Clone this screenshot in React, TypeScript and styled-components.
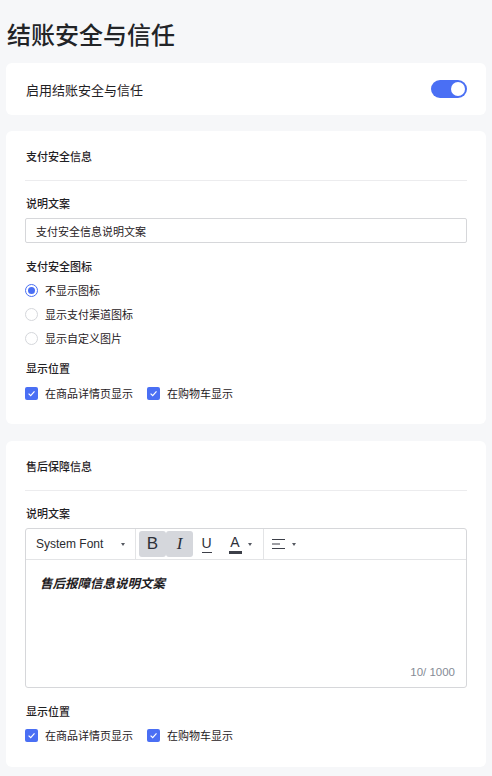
import React, { useState } from 'react'
import styled, { createGlobalStyle } from 'styled-components'

const GlobalStyle = createGlobalStyle`
    body {
        margin: 0;
        background: #f6f7f9;
        font-family: "Noto Sans CJK SC", "Liberation Sans", sans-serif;
        color: #1f2124;
    }
`

const Page = styled.div`
    padding: 16px 6px 10px 6px;
`
const PageTitle = styled.h1`
    margin: 0 0 11px 1px;
    font-size: 24px;
    line-height: 36px;
    font-weight: 500;
    color: #222427;
`
const Card = styled.div<{ $gap?: number }>`
    background: #fff;
    border-radius: 6px;
    padding: 0 19px;
    margin-bottom: ${(p) => p.$gap ?? 16}px;
`
const ToggleRow = styled.div`
    height: 52px;
    display: flex;
    align-items: center;
    justify-content: space-between;
    font-size: 13px;
    padding-left: 1px;
`
const Switch = styled.button<{ $on: boolean }>`
    width: 36px;
    height: 18px;
    border-radius: 9px;
    border: none;
    padding: 0;
    cursor: pointer;
    background: ${(p) => (p.$on ? '#4a6ff4' : '#c9ccd2')};
    display: flex;
    align-items: center;
    justify-content: ${(p) => (p.$on ? 'flex-end' : 'flex-start')};
    &::after {
        content: '';
        width: 14px;
        height: 14px;
        margin: 0 2px;
        border-radius: 50%;
        background: #fff;
    }
`
const SectionHead = styled.div`
    padding: 17px 0 16px 1px;
    font-size: 11px;
    line-height: 16px;
    font-weight: 500;
    border-bottom: 1px solid #ececee;
`
const Body = styled.div<{ $bottom: number }>`
    padding-bottom: ${(p) => p.$bottom}px;
`
const Label = styled.div<{ $top: number; $bottom: number }>`
    margin: ${(p) => p.$top}px 0 ${(p) => p.$bottom}px 1px;
    font-size: 11px;
    line-height: 16px;
    font-weight: 500;
`
const TextInput = styled.input`
    display: block;
    box-sizing: border-box;
    width: 100%;
    height: 25px;
    border: 1px solid #d6d7da;
    border-radius: 2px;
    padding: 0 10px;
    font-family: inherit;
    font-size: 11px;
    color: #1f2124;
    outline: none;
`
const OptionRow = styled.label`
    display: flex;
    align-items: center;
    height: 24px;
    gap: 7px;
    font-size: 11px;
    cursor: pointer;
`
const Radio = styled.span<{ $checked: boolean }>`
    box-sizing: border-box;
    width: 13px;
    height: 13px;
    border-radius: 50%;
    border: 1px solid ${(p) => (p.$checked ? '#4a6ff4' : '#d5d7db')};
    display: flex;
    align-items: center;
    justify-content: center;
    &::after {
        content: '';
        width: 7px;
        height: 7px;
        border-radius: 50%;
        background: ${(p) => (p.$checked ? '#4a6ff4' : 'transparent')};
    }
`
const CheckGroup = styled.div`
    display: flex;
    gap: 14px;
`
const Box = styled.span`
    width: 13px;
    height: 13px;
    border-radius: 2px;
    background: #4a6ff4;
    display: flex;
    align-items: center;
    justify-content: center;
`
const Editor = styled.div`
    border: 1px solid #d6d7da;
    border-radius: 3px;
    height: 158px;
    display: flex;
    flex-direction: column;
`
const Toolbar = styled.div`
    height: 30px;
    display: flex;
    align-items: center;
    border-bottom: 1px solid #e3e4e6;
`
const FontSelect = styled.div`
    width: 110px;
    height: 100%;
    box-sizing: border-box;
    display: flex;
    align-items: center;
    justify-content: space-between;
    padding: 0 10px;
    font-family: "Liberation Sans", Arial, sans-serif;
    font-size: 12px;
    color: #2a2c30;
    border-right: 1px solid #e3e4e6;
`
const ToolGroup = styled.div<{ $divider?: boolean }>`
    height: 100%;
    display: flex;
    align-items: center;
    padding: 0 3px;
    border-right: ${(p) => (p.$divider ? '1px solid #e3e4e6' : 'none')};
`
const ToolButton = styled.span<{ $active?: boolean; $w?: number }>`
    width: ${(p) => p.$w ?? 27}px;
    height: 26px;
    border-radius: 3px;
    background: ${(p) => (p.$active ? '#d5d7dc' : 'transparent')};
    display: flex;
    align-items: center;
    justify-content: center;
    gap: 6px;
    color: #2d3038;
`
const Glyph = styled.span<{ $serif?: boolean; $italic?: boolean }>`
    font-family: ${(p) => (p.$serif ? '"Liberation Serif", serif' : '"Liberation Sans", sans-serif')};
    font-style: ${(p) => (p.$italic ? 'italic' : 'normal')};
    font-size: 17px;
    line-height: 16px;
`
const Underlined = styled.span<{ $bar: number }>`
    display: flex;
    flex-direction: column;
    align-items: center;
    font-family: "Liberation Sans", sans-serif;
    font-size: 14px;
    line-height: 14px;
    &::after {
        content: '';
        width: ${(p) => (p.$bar > 1 ? 13 : 10)}px;
        height: ${(p) => p.$bar}px;
        margin-top: 2px;
        background: #3c3f48;
    }
`
const Caret = styled.span`
    width: 0;
    height: 0;
    border-left: 2px solid transparent;
    border-right: 2px solid transparent;
    border-top: 3px solid #555961;
`
const Content = styled.div`
    flex: 1;
    padding: 13px 11px 9px 14px;
    display: flex;
    flex-direction: column;
    justify-content: space-between;
`
const RichText = styled.div`
    font-size: 12.5px;
    line-height: 20px;
    font-weight: 700;
    font-style: italic;
`
const Counter = styled.div`
    align-self: flex-end;
    font-family: "Liberation Sans", sans-serif;
    font-size: 11.5px;
    color: #868b96;
`

const CheckMark = () => (
    <svg width="9" height="9" viewBox="0 0 9 9">
        <path d="M1.6 4.6 L3.7 6.6 L7.5 2.4" stroke="#fff" strokeWidth="1.2" fill="none" />
    </svg>
)

const AlignIcon = () => (
    <svg width="14" height="12" viewBox="0 0 14 12">
        <path d="M0 1.5h13M0 6h8M0 10.5h13" stroke="#3c3f48" strokeWidth="1.1" />
    </svg>
)

const Placement = () => (
    <CheckGroup>
        <OptionRow>
            <Box><CheckMark /></Box>在商品详情页显示
        </OptionRow>
        <OptionRow>
            <Box><CheckMark /></Box>在购物车显示
        </OptionRow>
    </CheckGroup>
)

const iconOptions = ['不显示图标', '显示支付渠道图标', '显示自定义图片']

const App = () => {
    const [enabled, setEnabled] = useState(true)
    const [iconMode, setIconMode] = useState(0)

    return (
        <Page>
            <GlobalStyle />
            <PageTitle>结账安全与信任</PageTitle>

            <Card>
                <ToggleRow>
                    启用结账安全与信任
                    <Switch $on={enabled} onClick={() => setEnabled(!enabled)} />
                </ToggleRow>
            </Card>

            <Card $gap={17}>
                <SectionHead>支付安全信息</SectionHead>
                <Body $bottom={19}>
                    <Label $top={14} $bottom={7}>说明文案</Label>
                    <TextInput defaultValue="支付安全信息说明文案" />
                    <Label $top={15} $bottom={4}>支付安全图标</Label>
                    {iconOptions.map((opt, idx) => (
                        <OptionRow key={idx} onClick={() => setIconMode(idx)}>
                            <Radio $checked={iconMode === idx} />
                            {opt}
                        </OptionRow>
                    ))}
                    <Label $top={10} $bottom={5}>显示位置</Label>
                    <Placement />
                </Body>
            </Card>

            <Card $gap={0}>
                <SectionHead>售后保障信息</SectionHead>
                <Body $bottom={20}>
                    <Label $top={14} $bottom={7}>说明文案</Label>
                    <Editor>
                        <Toolbar>
                            <FontSelect>
                                System Font
                                <Caret />
                            </FontSelect>
                            <ToolGroup $divider>
                                <ToolButton $active><Glyph>B</Glyph></ToolButton>
                                <ToolButton $active><Glyph $serif $italic>I</Glyph></ToolButton>
                                <ToolButton><Underlined $bar={1}>U</Underlined></ToolButton>
                                <ToolButton $w={40}>
                                    <Underlined $bar={3}>A</Underlined>
                                    <Caret />
                                </ToolButton>
                            </ToolGroup>
                            <ToolGroup>
                                <ToolButton $w={34}>
                                    <AlignIcon />
                                    <Caret />
                                </ToolButton>
                            </ToolGroup>
                        </Toolbar>
                        <Content>
                            <RichText>售后报障信息说明文案</RichText>
                            <Counter>10/ 1000</Counter>
                        </Content>
                    </Editor>
                    <Label $top={15} $bottom={4}>显示位置</Label>
                    <Placement />
                </Body>
            </Card>
        </Page>
    )
}

export default App
